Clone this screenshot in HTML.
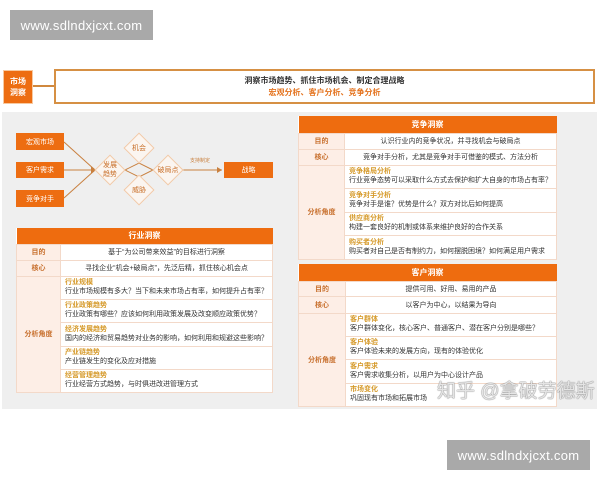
<!DOCTYPE html>
<html><head><meta charset="utf-8"><style>
*{margin:0;padding:0;box-sizing:border-box}
body{width:600px;height:480px;background:#fff;position:relative;overflow:hidden;font-family:"Liberation Sans","Noto Sans CJK SC",sans-serif}
.a{position:absolute}
.wm{background:#a9a9a9;color:#fff;font-size:13px;display:flex;align-items:center;justify-content:center;letter-spacing:.3px}
.ob{background:#ed6d12;color:#fff;font-size:7px;display:flex;align-items:center;justify-content:center}
.dm{width:22px;height:22px;transform:rotate(45deg);border:1px solid #f1c9a8;background:#fbf5f0}
.dt{font-size:7px;color:#c9702a;text-align:center;line-height:9px;display:flex;align-items:center;justify-content:center}
table{position:absolute;border-collapse:collapse;background:#fff;font-size:7px;color:#333}
td{border:1px solid #f3d9c9;padding:0 4px;vertical-align:middle;white-space:nowrap}
th{background:#ee6c0f;color:#fff;font-size:8px;font-weight:bold}
td.l{background:#fdeee6;color:#c8702e;text-align:center;padding:0;font-weight:bold}
td.c{text-align:center}
.t{color:#d69a2a;display:block;line-height:9px;font-weight:bold}
.s{display:block;line-height:10px}
</style></head><body>
<div class="a wm" style="left:10px;top:10px;width:143px;height:30px">www.sdlndxjcxt.com</div>
<div class="a wm" style="left:447px;top:440px;width:143px;height:30px">www.sdlndxjcxt.com</div>

<div class="a ob" style="left:3px;top:70px;width:30px;height:34px;font-size:8px;font-weight:bold;line-height:11px;text-align:center;border:1px solid #f7c9a0">市场<br>洞察</div>
<div class="a" style="left:33px;top:85px;width:21px;height:2px;background:#d0883e"></div>
<div class="a" style="left:54px;top:69px;width:541px;height:35px;border:2px solid #d69044;background:#fff;text-align:center;font-size:8px;font-weight:bold;line-height:12px;padding-top:4px">
<div style="color:#333">洞察市场趋势、抓住市场机会、制定合理战略</div>
<div style="color:#e4731e">宏观分析、客户分析、竞争分析</div></div>

<div class="a" style="left:2px;top:112px;width:595px;height:297px;background:#efefef"></div>

<div class="a ob" style="left:16px;top:133px;width:48px;height:17px">宏观市场</div>
<div class="a ob" style="left:16px;top:162px;width:48px;height:16px">客户需求</div>
<div class="a ob" style="left:16px;top:190px;width:48px;height:17px">竞争对手</div>
<div class="a ob" style="left:224px;top:162px;width:49px;height:16px">战略</div>
<svg class="a" style="left:0;top:120px" width="300" height="100">
<g stroke="#c9803f" stroke-width="1" fill="none">
<line x1="64" y1="22" x2="95" y2="50"/><line x1="64" y1="50" x2="95" y2="50"/><line x1="64" y1="78" x2="95" y2="50"/>
<polygon points="125,50 139,43 153,50 139,57"/>
<line x1="182" y1="50" x2="222" y2="50"/>
</g>
<polygon points="222,50 217,47 217,53" fill="#c9803f"/>
<polygon points="96,50 91,46 91,54" fill="#c9803f"/>
<text x="200" y="42" font-size="5" fill="#c9803f" text-anchor="middle" font-family="Noto Sans CJK SC">支持制定</text>
</svg>
<div class="a dm" style="left:99px;top:159px"></div>
<div class="a dm" style="left:128px;top:137px"></div>
<div class="a dm" style="left:128px;top:179px"></div>
<div class="a dm" style="left:157px;top:159px"></div>
<div class="a dt" style="left:96px;top:160px;width:28px;height:20px">发展<br>趋势</div>
<div class="a dt" style="left:125px;top:143px;width:28px;height:10px">机会</div>
<div class="a dt" style="left:125px;top:185px;width:28px;height:10px">威胁</div>
<div class="a dt" style="left:154px;top:165px;width:28px;height:10px">破局点</div>

<table style="left:16px;top:228px;width:257px">
<tr style="height:16px"><th colspan="2">行业洞察</th></tr>
<tr style="height:16px"><td class="l" style="width:46px">目的</td><td class="c">基于“为公司带来效益”的目标进行洞察</td></tr>
<tr style="height:16px"><td class="l">核心</td><td class="c">寻找企业“机会+破局点”，先泛后精，抓住核心机会点</td></tr>
<tr style="height:23px"><td class="l" rowspan="5">分析角度</td><td><span class="t">行业规模</span><span class="s">行业市场规模有多大？当下和未来市场占有率，如何提升占有率？</span></td></tr>
<tr style="height:23px"><td><span class="t">行业政策趋势</span><span class="s">行业政策有哪些？应该如何利用政策发展及改变顺应政策优势？</span></td></tr>
<tr style="height:24px"><td><span class="t">经济发展趋势</span><span class="s">国内的经济和贸易趋势对业务的影响，如何利用和规避这些影响？</span></td></tr>
<tr style="height:23px"><td><span class="t">产业链趋势</span><span class="s">产业链发生的变化及应对措施</span></td></tr>
<tr style="height:23px"><td><span class="t">经营管理趋势</span><span class="s">行业经营方式趋势，与时俱进改进管理方式</span></td></tr>
</table>

<table style="left:298px;top:116px;width:259px">
<tr style="height:17px"><th colspan="2">竞争洞察</th></tr>
<tr style="height:16px"><td class="l" style="width:47px">目的</td><td class="c">认识行业内的竞争状况，并寻找机会与破局点</td></tr>
<tr style="height:16px"><td class="l">核心</td><td class="c">竞争对手分析，尤其是竞争对手可借鉴的模式、方法分析</td></tr>
<tr style="height:23px"><td class="l" rowspan="4">分析角度</td><td><span class="t">竞争格局分析</span><span class="s">行业竞争态势可以采取什么方式去保护和扩大自身的市场占有率？</span></td></tr>
<tr style="height:24px"><td><span class="t">竞争对手分析</span><span class="s">竞争对手是谁？优势是什么？双方对比后如何提高</span></td></tr>
<tr style="height:23px"><td><span class="t">供应商分析</span><span class="s">构建一套良好的机制或体系来维护良好的合作关系</span></td></tr>
<tr style="height:24px"><td><span class="t">购买者分析</span><span class="s">购买者对自己是否有制约力，如何摆脱困境？如何满足用户需求</span></td></tr>
</table>

<table style="left:298px;top:264px;width:259px">
<tr style="height:17px"><th colspan="2">客户洞察</th></tr>
<tr style="height:15px"><td class="l" style="width:47px">目的</td><td class="c">提供可用、好用、易用的产品</td></tr>
<tr style="height:17px"><td class="l">核心</td><td class="c">以客户为中心，以结果为导向</td></tr>
<tr style="height:23px"><td class="l" rowspan="4">分析角度</td><td><span class="t">客户群体</span><span class="s">客户群体变化，核心客户、普通客户、潜在客户分别是哪些？</span></td></tr>
<tr style="height:23px"><td><span class="t">客户体验</span><span class="s">客户体验未来的发展方向，现有的体验优化</span></td></tr>
<tr style="height:24px"><td><span class="t">客户需求</span><span class="s">客户需求收集分析，以用户为中心设计产品</span></td></tr>
<tr style="height:23px"><td><span class="t">市场变化</span><span class="s">巩固现有市场和拓展市场</span></td></tr>
</table>

<div class="a" style="left:437px;top:376px;font-size:19px;color:rgba(255,255,255,.8);text-shadow:0 0 1px #777,0 0 1px #777;white-space:nowrap">知乎 @拿破劳德斯</div>
</body></html>
